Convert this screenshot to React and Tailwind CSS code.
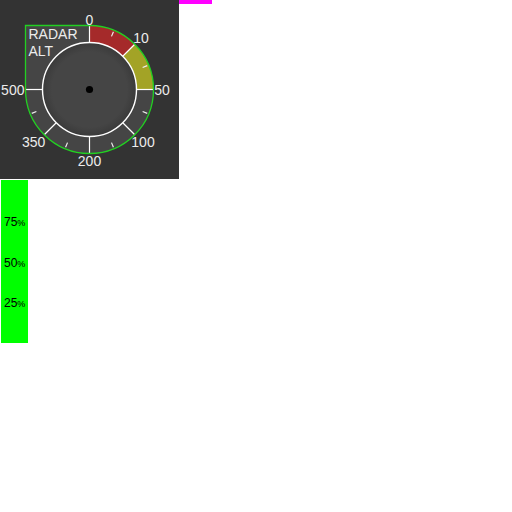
import React from 'react';

const CX = 89.5;
const CY = 89.5;
const R_OUT = 64;
const R_IN = 47;

// angle in degrees, clockwise from top
const pt = (deg, r) => {
    const a = (deg * Math.PI) / 180;
    return [CX + r * Math.sin(a), CY - r * Math.cos(a)];
};

const sector = (a0, a1) => {
    const [x0, y0] = pt(a0, R_OUT);
    const [x1, y1] = pt(a1, R_OUT);
    const [x2, y2] = pt(a1, R_IN);
    const [x3, y3] = pt(a0, R_IN);
    return `M${x0} ${y0} A${R_OUT} ${R_OUT} 0 0 1 ${x1} ${y1} L${x2} ${y2} A${R_IN} ${R_IN} 0 0 0 ${x3} ${y3} Z`;
};

const outline = `M${CX - R_OUT} ${CY} L${CX - R_OUT} ${CY - R_OUT} L${CX} ${CY - R_OUT} A${R_OUT} ${R_OUT} 0 1 1 ${CX - R_OUT} ${CY}`;

const MAJOR = [0, 45, 90, 135, 180, 225, 270];
const MINOR = [22.5, 67.5, 112.5, 157.5, 202.5, 247.5];

const LABELS = [
    { t: '0', x: 89.5, y: 24.5 },
    { t: '10', x: 141, y: 43 },
    { t: '50', x: 162, y: 94.5 },
    { t: '100', x: 143, y: 147 },
    { t: '200', x: 89.5, y: 166 },
    { t: '350', x: 33.7, y: 147 },
    { t: '500', x: 12.8, y: 94.5 },
];

const RadarAltGauge = () => (
    <div className="w-[179px] h-[179px] bg-[#333333] shrink-0">
        <svg width="179" height="179" viewBox="0 0 179 179">
            <defs>
                <radialGradient id="face" cx="50%" cy="50%" r="50%">
                    <stop offset="80%" stopColor="#454545" />
                    <stop offset="100%" stopColor="#3a3a3a" />
                </radialGradient>
            </defs>
            {/* ring */}
            <path d={outline + ' Z'} fill="#454545" />
            <path d={sector(0, 45)} fill="#a52a2a" />
            <path d={sector(45, 90)} fill="#a3a326" />
            {/* ticks */}
            {MAJOR.map(a => {
                const [x1, y1] = pt(a, R_IN);
                const [x2, y2] = pt(a, R_OUT);
                return <line key={a} x1={x1} y1={y1} x2={x2} y2={y2} stroke="#fff" strokeWidth="1.2" />;
            })}
            {MINOR.map(a => {
                const [x1, y1] = pt(a, 57.5);
                const [x2, y2] = pt(a, 62.5);
                return <line key={a} x1={x1} y1={y1} x2={x2} y2={y2} stroke="#eee" strokeWidth="1.2" />;
            })}
            {/* outline */}
            <path d={outline} fill="none" stroke="#22d022" strokeWidth="1.3" />
            {/* face */}
            <circle cx={CX} cy={CY} r={R_IN} fill="url(#face)" stroke="#fff" strokeWidth="1.4" />
            <circle cx={CX} cy={CY} r="3.6" fill="#000" />
            {/* labels */}
            <g fill="#ececec" fontFamily="'Liberation Sans', Arial, sans-serif" fontSize="14">
                {LABELS.map(l => (
                    <text key={l.t} x={l.x} y={l.y} textAnchor="middle">{l.t}</text>
                ))}
                <text x="28.5" y="39.3">RADAR</text>
                <text x="28.5" y="56">ALT</text>
            </g>
        </svg>
    </div>
);

const PercentBar = () => (
    <div className="relative ml-px mt-px w-[27px] h-[163px] bg-[#00ff00] text-black font-['Liberation_Sans',Arial,sans-serif]">
        {[['75', '25%'], ['50', '50%'], ['25', '75%']].map(([v, top]) => (
            <div
                key={v}
                className="absolute left-[3px] -translate-y-[45%] leading-none flex items-baseline"
                style={{ top }}
            >
                <span className="text-[12px]">{v}</span>
                <span className="text-[9px]">%</span>
            </div>
        ))}
    </div>
);

export default function App() {
    return (
        <div className="bg-white min-h-[512px]">
            <div className="flex items-start">
                <RadarAltGauge />
                <div className="w-[33px] h-[4px] bg-[#ff00ff]" />
            </div>
            <PercentBar />
        </div>
    );
}
